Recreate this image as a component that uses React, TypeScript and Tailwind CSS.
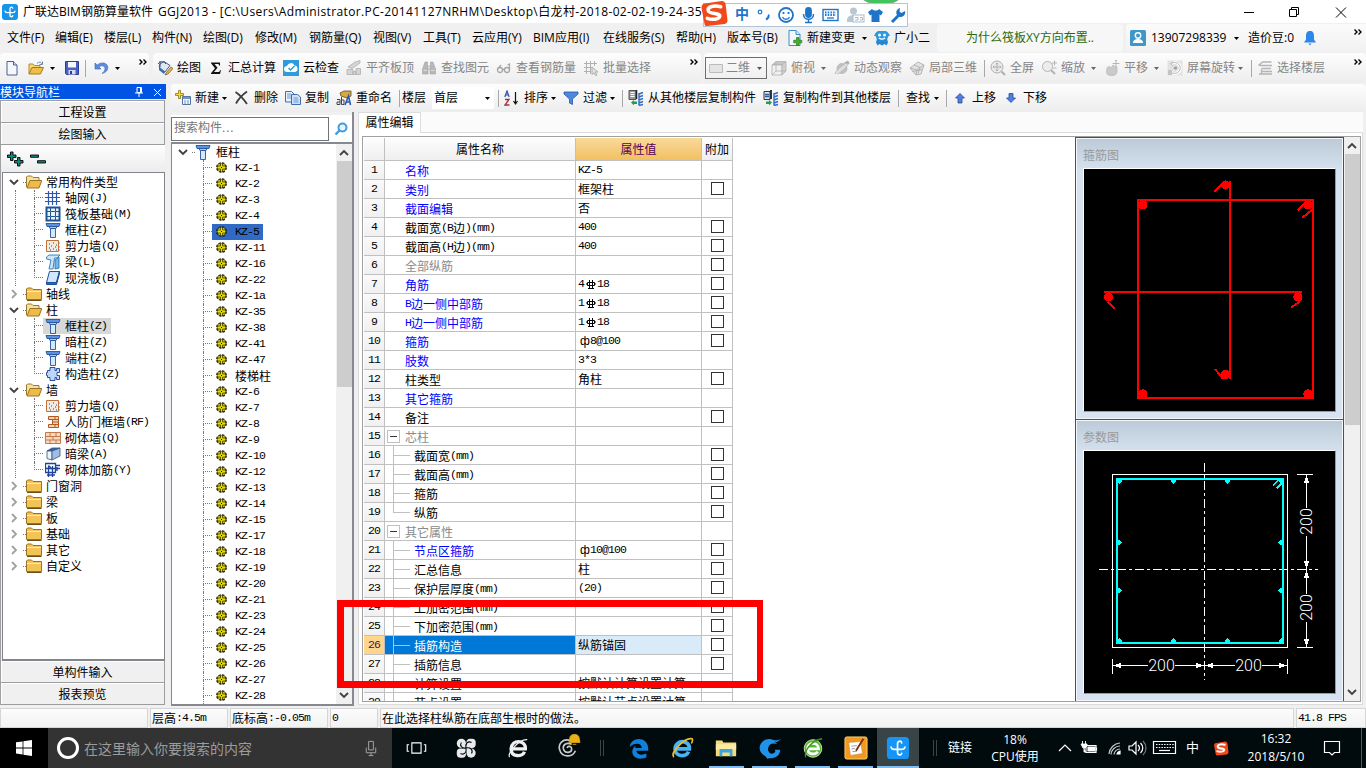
import React from 'react'
import clsx from 'clsx'

const UI = "font-['Open_Sans','Noto_Sans_CJK_SC',sans-serif]"
const SONG = "font-['Noto_Sans_CJK_SC',sans-serif]"

// Chinese runs stay at 12px, latin runs are squeezed to half-width cells
function Song({ children, className }: { children: string; className?: string }) {
  const parts = children.split(/([\x20-\x7e]+)/).filter(Boolean)
  return (
    <span className={clsx(SONG, 'inline-flex items-center whitespace-pre text-[12px] leading-4', className)}>
      {parts.map((part, i) =>
        /^[\x20-\x7e]+$/.test(part) ? (
          <span key={i} className="font-['Liberation_Mono',monospace] text-[11.5px] tracking-[-0.9px]">{part}</span>
        ) : (
          <span key={i}>{part}</span>
        )
      )}
    </span>
  )
}

function Caret({ className }: { className?: string }) {
  return (
    <svg viewBox="0 0 7 4" className={clsx('h-[3px] w-[5px] shrink-0', className)}>
      <path d="M0 0h7L3.5 4z" fill="currentColor" />
    </svg>
  )
}

function Sep({ className }: { className?: string }) {
  return <span className={clsx('h-[17px] w-px shrink-0 bg-[#a8a8a8]', className)} />
}

function More({ className }: { className?: string }) {
  return (
    <svg viewBox="0 0 8 6" className={clsx('h-[6px] w-[8px] shrink-0 self-start', className)} fill="none" stroke="#000" strokeWidth="1.4">
      <path d="M.5.5 3 3 .5 5.5M4.5.5 7 3 4.5 5.5" />
    </svg>
  )
}

const ICONS: Record<string, React.ReactNode> = {
  file: (
    <g>
      <path d="M3 1.5h6.5L13 5v10H3z" fill="#f5f9ff" stroke="#4a6187" />
      <path d="M9.5 1.5V5H13" fill="#cfe0f5" stroke="#4a6187" />
    </g>
  ),
  open: (
    <g>
      <path d="M1 14V4h4l1.500 1.500H12V8" fill="#f5d778" stroke="#b38a2d" />
      <path d="M1 14 4 7.500h11.500L12.500 14z" fill="#f0bd45" stroke="#a77a22" />
      <path d="M9 3.500c2-2 4-1.500 5 .5M14.500 1.500v3h-3" fill="none" stroke="#6c86a5" />
    </g>
  ),
  save: (
    <g>
      <path d="M1.500 1.500h13v13h-12l-1-1z" fill="#4961c5" stroke="#2c3c96" />
      <path d="M4 2h8v5.500H4z" fill="#f5f7ff" />
      <path d="M4.500 10h7v4.500h-7z" fill="#d6daf0" />
      <path d="M6 11h2v3H6z" fill="#2b3a8c" />
    </g>
  ),
  undo: (
    <path d="M2 3v6h6L6 7c2-2 6-1.500 6 1.500 0 2-1 3.500-3 5 4-1 5.800-3.300 5.800-6C14.800 2.500 8 1.500 4.200 5z" fill="#5b8bdc" stroke="#3464b8" strokeWidth=".6" />
  ),
  paint: (
    <g>
      <path d="m3 4 4-2.500 6 4-5 6.500-6-5z" fill="#dfe8f2" stroke="#4b5e7a" />
      <path d="M3 1v6M1 4c2-3 6-3 8 0" fill="none" stroke="#34517e" />
      <path d="M2 7.500 8 12l-1 2-5-4z" fill="#2f6bb3" />
      <path d="m9 13 5-6 2 1.500-5 5.500-3 1z" fill="#e9b64c" stroke="#6b5126" strokeWidth=".7" />
    </g>
  ),
  sigma: <path d="M3 2.500h9v3h-1c0-1.200-.5-1.500-1.500-1.500H6.500l3 3.800L6 12h4c1.200 0 1.700-.5 2-1.800h1L12 14H3v-.8L7 8.300 3 3.300z" fill="#111" />,
  cloud: (
    <g>
      <rect width="16" height="16" fill="#2f9bdf" />
      <path d="M4 12a3 3 0 0 1 0-6 4 4 0 0 1 7.500-.5A3.300 3.300 0 0 1 12 12z" fill="#fff" />
      <path d="m5.500 8 2 2 4-4" fill="none" stroke="#2f9bdf" strokeWidth="1.500" />
    </g>
  ),
  align: (
    <g fill="#d4d4d4" stroke="#b0b0b0" strokeWidth=".8">
      <path d="m2 7 7-5 5-1.500V3L6 8.500z" />
      <path d="M1 9.500h6v5H1zM7 11.500h3v3H7zM10 8.500h4.500v6H10z" />
    </g>
  ),
  binoc: (
    <g fill="#b8b8b8" stroke="#a2a2a2" strokeWidth=".6">
      <path d="M4 2h2.500v3l.5 4v5H1.500V9zM9.500 2H12l2.500 7v5H9V9l.5-4z" />
      <path d="M6.500 6h3v3h-3z" fill="#ddd" />
      <path d="M2.500 10.500h3.500M10 10.500h3.500" stroke="#f4f4f4" />
    </g>
  ),
  glasses: (
    <g fill="none" stroke="#a6a6a6" strokeWidth="1.300">
      <circle cx="4" cy="10" r="2.500" />
      <circle cx="11" cy="10" r="2.500" />
      <path d="M6.500 9.500h2M2 8.500 5 5M13.500 10V4l-2 1" />
    </g>
  ),
  batch: (
    <g fill="none" stroke="#b0b0b0">
      <path d="M1 3.500h13M1 7.500h9M1 11.500h7M3.500 1v13M7.500 1v13M11.500 1v5" />
      <path d="m9 7 6 5h-3l2 3-1.500.5L11 13l-2 1.500z" fill="#e2e2e2" />
    </g>
  ),
  flat: <path d="M1.500 4.500h13v8h-13z" fill="#e4e4e4" stroke="#bcbcbc" />,
  cube: (
    <g stroke="#b0b0b0" strokeWidth=".8">
      <path d="M1 5 5 1.500h10L11 5z" fill="#c6c6c6" />
      <path d="M1 5h10v10H1z" fill="#f0f0f0" />
      <path d="m11 5 4-3.500V11l-4 4z" fill="#d0d0d0" />
      <path d="M5 2v9l-4 4M5 11h10" fill="none" />
    </g>
  ),
  orbit: (
    <g stroke="#b2b2b2" strokeWidth=".8">
      <circle cx="8" cy="8.500" r="5" fill="#c2c2c2" />
      <path d="M1 14c0-3 8-10 13.500-12 2 1-6 10-11 12" fill="#dedede" />
      <path d="m10 3 4-2 1 3" fill="#aaa" />
    </g>
  ),
  local3d: (
    <g fill="#e2e2e2" stroke="#b0b0b0" strokeWidth=".9">
      <path d="m1 8 8-6 6 3-3 9-5 1z" />
      <path d="m1 8 7 2 7-5M8 10l-1 5M5 5l6 2.500-2 6M3.500 11.500l9.500-2" fill="none" />
    </g>
  ),
  full: (
    <g fill="#eaeaea" stroke="#b0b0b0">
      <circle cx="7" cy="7" r="6" />
      <path d="m11.500 11.500 3.500 3.500" strokeWidth="2.200" />
      <path d="M7 3v8M3 7h8M5.800 4.200 7 3l1.200 1.200M5.800 9.800 7 11l1.200-1.200M4.200 5.800 3 7l1.200 1.200M9.800 5.800 11 7 9.800 8.200" fill="none" />
    </g>
  ),
  zoom: (
    <g fill="#ededed" stroke="#b4b4b4">
      <circle cx="6.500" cy="6.500" r="5" />
      <path d="m10 10 4 4" strokeWidth="2.200" />
      <path d="M11 3h5M13.500.5v5M12 8h3.500" fill="none" />
    </g>
  ),
  pan: (
    <g fill="#cacaca" stroke="#b6b6b6" strokeWidth=".7">
      <path d="M3 8c1-2 3-2 4 0l2-3 2 1.500L13 7v5c0 2-2 3.500-5 3.500s-5-.5-5.500-3z" />
      <path d="M12 0v7M8.500 3.500h7M11 1l1-1 1 1" fill="none" strokeWidth="1" />
    </g>
  ),
  rotate: (
    <g>
      <path d="M.5.5h15v15H.5z" fill="#e2e2e2" />
      <path d="M4 4a5.500 5.500 0 1 1 0 8" fill="none" stroke="#fff" strokeWidth="3" />
      <path d="M4.500 3.500A5.500 5.500 0 1 1 4 12M6 1.500l-2.500 2L6 6" fill="none" stroke="#b4b4b4" />
      <path d="M6.500 8.500C7 6 9.500 6 10.500 7.500L9 10z" fill="#a0a0a0" />
      <path d="M1 10h4v5H1z" fill="#c4c4c4" />
    </g>
  ),
  floors: (
    <path d="m1.500 5.500 4-3.500h9M3 5.500h12M5 8.500h9M4.500 8.500v5.500M5 11.500h10M2 14h13" fill="none" stroke="#b4b4b4" strokeWidth="1.300" />
  ),
  add: (
    <g>
      <path d="M7.500 6.500h8v8h-8z" fill="#eef4fc" stroke="#57749f" />
      <path d="M8 7h7v2H8z" fill="#6f95ce" />
      <path d="M9 11h2M12 11h2M9 13h2M12 13h2" stroke="#7895bd" />
      <path d="M3.500.5h2v3h3v2h-3v3h-2v-3h-3v-2h3z" fill="#f5dc45" stroke="#8b7317" strokeWidth=".8" />
    </g>
  ),
  del: <path d="M1.500 2C6 5 9.500 9 13 14M13 1.500C8 5 4.500 9 2 13.500" fill="none" stroke="#3d3d3d" strokeWidth="1.800" />,
  copy: (
    <g fill="#eaf2fc" stroke="#416db0">
      <path d="M.5 1.500h6L9 4v8H.5z" />
      <path d="M6.500 4.500h6L15.500 7v7.500h-9z" fill="#cfe1f8" />
      <path d="M2 4h4M2 6h4M2 8h4M8.500 8h4.500M8.500 10h5M8.500 12h5" fill="none" stroke="#6f97cf" />
    </g>
  ),
  rename: (
    <g>
      <path d="m4 3 4-2h7v5l-4 2-6-2z" fill="#d9a93d" stroke="#5f4a18" strokeWidth=".8" />
      <path d="M1 9.500h3v5H1v-2.500h3M5.500 7v7.500H8V10H6" fill="none" stroke="#444" />
      <path d="m9 15 3.500-9 2 9M10 12h4" fill="none" stroke="#2759b8" strokeWidth="1.600" />
    </g>
  ),
  sort: (
    <g fill="none">
      <path d="m.8 7 2.200-6 2.200 6M1.500 5h3" stroke="#2b4fa8" strokeWidth="1.200" />
      <path d="M1 9.500h4L1 15h4.500" stroke="#a8323a" strokeWidth="1.300" />
      <path d="M11.500 2v12M9.500 11l2 3 2-3" stroke="#111" strokeWidth="1.200" />
    </g>
  ),
  filter: <path d="M1 2h14v2L9.500 9v5.500l-3-1.500V9L1 4z" fill="#4f86e0" stroke="#2657a8" strokeWidth=".8" />,
  copyfrom: (
    <g>
      <path d="M1 .5h7v9H1z" fill="#9a9a9a" stroke="#555" />
      <path d="M2.500 2.500h4M2.500 4.500h4M2.500 6.500h4" stroke="#fff" />
      <path d="M8.500 0v9" stroke="#222" strokeWidth="1.500" />
      <path d="m11 4 4-1.500M11 7l4-1.500M11 10l4-1.500M11 13l4-1.500M11 15.500l4-1M11 3v12.500" stroke="#2f6bc4" strokeWidth="1.400" />
      <path d="m3 12.500 3-2.500v1.500h3V14H6v1.500z" fill="#1ea04c" />
    </g>
  ),
  copyto: (
    <g>
      <path d="M1 1.500h6v8H1z" fill="#dfe6f2" stroke="#333" />
      <path d="M2 4.500h4M2 6.500h4" stroke="#2c5cb0" strokeWidth="1.500" />
      <path d="M8 0v9" stroke="#222" strokeWidth="1.800" />
      <path d="m11 4 4-1.500M11 7l4-1.500M11 10l4-1.500M11 13l4-1.500M11 15.500l4-1M11 3v12.500" stroke="#2f6bc4" strokeWidth="1.400" />
      <path d="m9 12.500-3-2.500v1.500H3V14h3v1.500z" fill="#1ea04c" />
    </g>
  ),
  up: <path d="m8 3.500 4.500 4.500H10v5H6V8H3.500z" fill="#4f7fe0" stroke="#24489e" strokeWidth=".8" />,
  down: <path d="M8 12.500 3.500 8H6V3.500h4V8h2.500z" fill="#4f7fe0" stroke="#24489e" strokeWidth=".8" />,
  change: (
    <g>
      <path d="M2 .5h7l4 4v11H2z" fill="#f2f9ff" stroke="#3a8fc5" />
      <path d="M9 .5v4h4" fill="#cfe6f7" stroke="#3a8fc5" />
      <path d="M9.500 7.500h2.500v2.800h2.800v2.500H12v2.800H9.500v-2.800H6.700v-2.500h2.800z" fill="#45b02d" stroke="#2a7a18" strokeWidth=".7" />
    </g>
  ),
  mascot: (
    <g>
      <path d="M3 8.500h10l1 4-1.500 3-2-1.500L8 15.500 5.500 14l-2 1.500L2 12.500z" fill="#2586d0" />
      <path d="M2 2.500 4 1h8l2 1.500 2 3-2 1c0 3-2.500 4-6 4s-6-1-6-4l-2-1z" fill="#2b98e2" />
      <circle cx="5.500" cy="5" r="1.500" fill="#fff" />
      <circle cx="10.500" cy="5" r="1.500" fill="#fff" />
      <path d="M5 8c2 1.500 4 1.500 6 0" fill="none" stroke="#fff" strokeWidth="1.200" />
    </g>
  ),
  user: (
    <g>
      <rect width="16" height="16" rx="1.500" fill="#3f97c9" />
      <circle cx="8" cy="5.500" r="2.700" fill="none" stroke="#fff" strokeWidth="1.500" />
      <path d="M3 13c0-3 2.500-4 5-4s5 1 5 4z" fill="#fff" />
    </g>
  ),
  bell: (
    <path d="M8 1c3 0 4 2 4 5v3.500l2 3H2l2-3V6c0-3 1-5 4-5zM6.500 13.500h3L8 15.500z" fill="#2f86ea" />
  ),
  appLogo: (
    <g>
      <rect width="16" height="16" rx="3" fill="#1594ea" />
      <path d="M10.800 4.200c-.3-1.700-2.800-1.500-2.800.5V11c0 2.200 2.500 2.200 2.800.7M3 7.200c.3 1.300 1.200 1.500 2.200 1.500h5.600c1.200 0 2-.3 2.200-1.500M8 8.700v3.500" fill="none" stroke="#fff" strokeWidth="1.300" strokeLinecap="round" />
    </g>
  ),
  folder: (
    <g>
      <path d="M.5 13.500V3l1-1h4L7 3.500h8.500v10z" fill="#f2c458" stroke="#9a7426" />
      <path d="M1 5h14v1H1z" fill="#fdebb0" />
      <path d="M1 14.500h14.500" stroke="#6e5017" />
    </g>
  ),
  folderOpen: (
    <g>
      <path d="M.5 13V3l1-1h4L7 3.500h6V7" fill="#f8e09a" stroke="#9a7a30" />
      <path d="m1 14 3-7.500h11.800L13 14z" fill="#efbb48" stroke="#9a7426" />
    </g>
  ),
  axis: <path d="M0 3.500h15M0 7.500h15M0 11.500h15M3.500 1v14M7.500 1v14M11.500 1v14" fill="none" stroke="#2c55b0" strokeWidth="1.200" />,
  raft: (
    <g fill="none" stroke="#1d5496">
      <path d="M1.500 1.500h13v13h-13z" strokeWidth="2" fill="#e6f2fc" />
      <path d="M5.500 5.500h5v5h-5zM5.500 2v3M10.500 2v3M5.500 11v3M10.500 11v3M2 5.500h3M2 10.500h3M11 5.500h3M11 10.500h3" />
    </g>
  ),
  column: (
    <g stroke="#24549e" strokeWidth=".9">
      <path d="M1 1.500h14l-1 3H2z" fill="#5c93e0" />
      <path d="M4 4.500h8l-1 2H5z" fill="#a9cbf5" />
      <path d="M5.500 6.500h5v9h-5z" fill="#d6e8fc" />
    </g>
  ),
  shear: (
    <g>
      <path d="M1.500 2.500h12v11h-12z" fill="#efeae4" stroke="#c0703a" />
      <path d="M4 6h1M8 5h1M6 8h1M10 9h1M4 10h1M8 11h1M11 7h1M11 12h1M5 12h1" stroke="#444" />
      <path d="M13 5h2M13 9h2M13 12h2" stroke="#c0703a" />
    </g>
  ),
  beam: (
    <g stroke="#2c78b8" strokeWidth=".9" fill="#cde6fa">
      <path d="M1.500 3 4 1h11l-3 3H9.500L8 15H4L6 6 1.500 5z" />
      <path d="m10 6 4-3v11l-4 1z" fill="#77b5e8" />
    </g>
  ),
  slab: (
    <g stroke="#1c50a0">
      <path d="M4.500 1.500h10l-3 11h-10z" fill="#d2e6fb" />
      <path d="M1.500 12.500v2h10l3-11v-2l-3 11z" fill="#2c66c0" />
    </g>
  ),
  gouzao: <path d="M5 1.500h5v3h1.500v-2h3v4H12v3h2.500v4h-3v-2H10v3H5v-3H2.500v-2h-1v-3h1v-2H5z" fill="#bcd6f8" stroke="#2a4d9c" />,
  rf: <path d="M3.500 2.500h10v11h-10v-3h4v-5h-4zM7.500 5.500h6M7.500 8h6M7.500 10.500h6M10 2.500v3M10 10.500v3" fill="#f3d3b8" stroke="#b4581e" />,
  brick: (
    <g>
      <path d="M.5 2.500h15v11H.5z" fill="#f6d9c0" stroke="#c27a48" />
      <path d="M1 6.500h14M1 10h14M5 2.500v4M11 2.500v4M8 6.500V10M5 10v3.500M11 10v3.500" stroke="#c27a48" />
    </g>
  ),
  hidden: (
    <g stroke="#33517e" strokeWidth=".8">
      <path d="m2 5 5-3h8L11 5z" fill="#3a66a8" />
      <path d="M2 5h5v9l-5-1.500z" fill="#eef4fb" />
      <path d="m7 5 8-3v8l-8 4z" fill="#9dbde3" />
    </g>
  ),
  jiajin: <path d="M.5 1.500h10v9H.5zM0 6.500h15M3.500 4v11M7.500 4v11M10 3.500h5M3.500 3.500l4 4M2 13h8M12 5v4" fill="none" stroke="#1f44a0" strokeWidth="1.300" />,
  gear: (
    <g>
      <circle cx="5.500" cy="5.500" r="4.500" fill="none" stroke="#1c1c00" strokeWidth="1.800" strokeDasharray="2.400 1.130" />
      <circle cx="5.500" cy="5.500" r="4.200" fill="#f0e000" stroke="#2a2a00" strokeWidth=".5" />
      <path d="M4.500 1v3H1.500M6.500 1v3h3M4.500 10V7h-3M6.500 10V7h3" fill="none" stroke="#3a3a00" strokeWidth=".8" />
      <path d="M5 5h1v1H5z" fill="#111" />
    </g>
  ),
}

function Icon({ name, className = 'h-4 w-4' }: { name: string; className?: string }) {
  return (
    <svg viewBox={name === 'gear' ? '0 0 11 11' : '0 0 16 16'} className={clsx('shrink-0', className)}>
      {ICONS[name]}
    </svg>
  )
}

interface ToolProps {
  icon: string
  label: string
  w: string
  off?: boolean
  caret?: string
}

function Tool({ icon, label, w, off, caret }: ToolProps) {
  return (
    <div className={clsx('flex shrink-0 items-center whitespace-nowrap', w, off && 'text-[#858585]')}>
      <Icon name={icon} className="mr-1 h-4 w-4" />
      <span>{label}</span>
      {caret && <Caret className={clsx(caret, off && 'text-[#666]')} />}
    </div>
  )
}

/* ---------- title + menu ---------- */

function SogouS({ className }: { className?: string }) {
  return (
    <svg viewBox="0 0 28 28" className={className}>
      <path d="M3 4 22 1q3 0 4 3l2 17q0 3-3 4L7 27q-3 0-3-3L1 8q0-3 2-4z" fill="#f04a1a" />
      <path d="M21 7C14 5 7 7 8 11c1 4 13 2 12 6-1 3-8 4-13 2" fill="none" stroke="#fff" strokeWidth="3.600" strokeLinecap="round" />
    </svg>
  )
}

function ImeBar() {
  return (
    <>
      <div className="absolute left-[855px] top-[-36px] h-10 w-[52px] rounded-full border border-[#8f9e92] bg-[#3fc65b]" />
      <div className="absolute left-[703px] top-[3px] flex h-6 w-[205px] items-center border border-[#b3c4d6] bg-white pl-[31px]">
        <span className="-mt-[2px] w-[22px] shrink-0 text-[14px] font-bold leading-5 text-[#1e74c9]">中</span>
        <svg viewBox="-5 0 150 20" className="h-5 w-[150px] shrink-0" fill="none" stroke="#1e74c9" strokeWidth="1.800">
          <circle cx="-2" cy="7" r="1.800" strokeWidth="1.200" />
          <path d="M6 10c1.500 1 0 3.500-2 4.500" strokeWidth="2.200" />
          <circle cx="24" cy="10" r="7" />
          <path d="M20.500 12c1.500 3 5.500 3 7 0" strokeWidth="1.300" />
          <path d="M21.500 7v2M26.500 7v2" />
          <rect x="44" y="3" width="5" height="9" rx="2.500" fill="#1e74c9" />
          <path d="M41.500 9c0 7 10 7 10 0M46.500 14v3.500M43 17.500h7" strokeWidth="1.500" />
          <rect x="61" y="4.500" width="15" height="11" strokeWidth="1.400" />
          <path d="M63 7.500h11M63 10h11" strokeDasharray="1.500 1.200" />
          <path d="M65 13h7" strokeWidth="1.300" />
          <g stroke="none" fill="#b9c6d3">
            <circle cx="91.500" cy="6" r="3.500" />
            <path d="M85 15c0-4 4-5 7-5v7h-7z" />
          </g>
          <rect x="91" y="10" width="11" height="7" stroke="#a9bccd" fill="#fff" strokeWidth="1" />
          <path d="M93 12.500h3v2.500h-3M98 12.500h2.500V15H98" stroke="#a9bccd" strokeWidth="1" />
          <path d="m110 4-4 3 2 3.500 1.500-1V17h8V9.500l1.500 1 2-3.500-4-3c-1.500 2-5 2-7 0z" fill="#1e74c9" stroke="none" />
          <path d="m130 17 7-7" strokeWidth="3" />
          <path d="M143 6a4.500 4.500 0 1 1-5-3l-.5 3.500 2 1.500z" fill="#1e74c9" stroke="none" />
        </svg>
      </div>
      <SogouS className="absolute left-[700px] top-0 h-[27px] w-7" />
    </>
  )
}

function TitleBar() {
  return (
    <div className="flex h-[23px] items-center bg-white pl-[2px] text-[12px]">
      <Icon name="appLogo" />
      <span className="ml-[5px] whitespace-nowrap leading-[23px]">广联达BIM钢筋算量软件</span>
      <span className="ml-[5px] w-[541px] whitespace-nowrap tracking-[0.37px]">GGJ2013 - [C:\Users\Administrator.PC-20141127NRHM\Desktop\白龙村-2018-02-02-19-24-35</span>
      <svg viewBox="0 0 104 12" className="ml-auto mr-[19px] h-3 w-[104px] shrink-0" fill="none" stroke="#000">
        <path d="M1 6.500h10" />
        <path d="M46.500 3.500h7v7h-7zM48.500 3.500v-2h7v7h-2M93 1.500l10 10M103 1.500l-10 10" />
      </svg>
    </div>
  )
}

const MENU = [
  ['文件(F)', 'w-[48px]'],
  ['编辑(E)', 'w-[49px]'],
  ['楼层(L)', 'w-[48px]'],
  ['构件(N)', 'w-[51px]'],
  ['绘图(D)', 'w-[52px]'],
  ['修改(M)', 'w-[54px]'],
  ['钢筋量(Q)', 'w-[64px]'],
  ['视图(V)', 'w-[50px]'],
  ['工具(T)', 'w-[49px]'],
  ['云应用(Y)', 'w-[61px]'],
  ['BIM应用(I)', 'w-[70px]'],
  ['在线服务(S)', 'w-[73px]'],
  ['帮助(H)', 'w-[51px]'],
  ['版本号(B)', 'w-[60px]'],
]

function MenuBar() {
  return (
    <div className="flex h-[30px] items-center pl-[7px] text-[12px]">
      {MENU.map(([label, w]) => (
        <span key={label} className={clsx('shrink-0 whitespace-nowrap', w)}>{label}</span>
      ))}
      <Tool icon="change" label="新建变更" w="w-[87px]" caret="ml-[7px]" />
      <Tool icon="mascot" label="广小二" w="w-[63px]" />
      <div className="flex h-7 w-[186px] shrink-0 items-center justify-center rounded-sm bg-[#f7f7f7] text-[#2a6a0c]">为什么筏板XY方向布置..</div>
      <div className="ml-[3px] flex h-7 flex-1 items-center rounded-l-sm bg-linear-to-b from-[#fbfbfb] to-[#f1f1f1] pl-1">
        <Icon name="user" />
        <span className="ml-[5px] w-[83px] whitespace-nowrap">13907298339</span>
        <Caret />
        <span className="ml-[9px] w-[54px] whitespace-nowrap">造价豆:0</span>
        <Icon name="bell" />
        <More className="ml-auto mr-1 mt-[5px]" />
      </div>
    </div>
  )
}

const bar = 'flex items-center rounded-sm bg-linear-to-b from-[#fdfdfd] to-[#ededed]'

function MainToolbar() {
  return (
    <div className="flex h-[31px] gap-1 pb-px text-[12px]">
      <div className={clsx(bar, 'w-[149px] shrink-0 pl-1')}>
        <Icon name="file" className="mr-2 h-4 w-4" />
        <Icon name="open" className="mr-[6px] h-4 w-4" />
        <Caret className="mr-[9px]" />
        <Icon name="save" className="mr-[5px] h-4 w-4" />
        <Sep className="mr-[7px] h-6" />
        <Icon name="undo" className="mr-[6px] h-4 w-4" />
        <Caret />
        <More className="ml-auto mr-[2px] mt-[6px]" />
      </div>
      <div className={clsx(bar, 'w-[548px] shrink-0 pl-1')}>
        <Tool icon="paint" label="绘图" w="w-[51px]" />
        <Tool icon="sigma" label="汇总计算" w="w-[75px]" />
        <Tool icon="cloud" label="云检查" w="w-[63px]" />
        <Tool off icon="align" label="平齐板顶" w="w-[75px]" />
        <Tool off icon="binoc" label="查找图元" w="w-[75px]" />
        <Tool off icon="glasses" label="查看钢筋量" w="w-[87px]" />
        <Tool off icon="batch" label="批量选择" w="w-[75px]" />
        <More className="ml-auto mr-[3px] mt-[6px]" />
      </div>
      <div className={clsx(bar, '-ml-px flex-1')}>
        <div className="ml-px mr-[4px] flex h-[22px] w-[62px] shrink-0 items-center border border-[#6d6d6d] pl-[2px] text-[#858585]">
          <Icon name="flat" className="mr-[2px] h-4 w-4" />
          <span>二维</span>
          <Caret className="ml-[7px] text-[#555]" />
        </div>
        <Tool off icon="cube" label="俯视" w="w-[63px]" caret="ml-[6px]" />
        <Tool off icon="orbit" label="动态观察" w="w-[75px]" />
        <Tool off icon="local3d" label="局部三维" w="w-[75px]" />
        <Sep className="mr-[5px]" />
        <Tool off icon="full" label="全屏" w="w-[51px]" />
        <Tool off icon="zoom" label="缩放" w="w-[63px]" caret="ml-[6px]" />
        <Tool off icon="pan" label="平移" w="w-[63px]" caret="ml-[6px]" />
        <Tool off icon="rotate" label="屏幕旋转" w="w-[84px]" caret="ml-[3px]" />
        <Sep className="mr-[5px]" />
        <Tool off icon="floors" label="选择楼层" w="w-[75px]" />
        <More className="ml-auto mr-1 mt-[6px]" />
      </div>
    </div>
  )
}

function ComponentToolbar() {
  return (
    <div className={clsx(bar, 'h-7 shrink-0 pl-1 text-[12px]')}>
      <Tool icon="add" label="新建" w="w-[59px]" caret="ml-[3px]" />
      <Tool icon="del" label="删除" w="w-[51px]" />
      <Tool icon="copy" label="复制" w="w-[51px]" />
      <Tool icon="rename" label="重命名" w="w-[63px]" />
      <Sep className="mr-[2px]" />
      <span className="w-[30px] shrink-0">楼层</span>
      <div className="flex h-[22px] w-[62px] shrink-0 items-center bg-white pl-[2px]">
        <span className="w-[51px]">首层</span>
        <Caret />
      </div>
      <Sep className="ml-1 mr-[5px]" />
      <Tool icon="sort" label="排序" w="w-[59px]" caret="ml-[3px]" />
      <Tool icon="filter" label="过滤" w="w-[59px]" caret="ml-[3px]" />
      <Sep className="mr-[5px]" />
      <Tool icon="copyfrom" label="从其他楼层复制构件" w="w-[135px]" />
      <Tool icon="copyto" label="复制构件到其他楼层" w="w-[135px]" />
      <Sep className="mr-[7px]" />
      <span className="w-[28px] shrink-0">查找</span>
      <Caret className="mr-[7px]" />
      <Sep className="mr-[5px]" />
      <Tool icon="up" label="上移" w="w-[51px]" />
      <Tool icon="down" label="下移" w="w-[51px]" />
    </div>
  )
}

/* ---------- module navigation ---------- */

type NavNode = { label: string; icon?: string; open?: boolean; last?: boolean; active?: boolean }

const NAV: NavNode[] = [
  { label: '常用构件类型', open: true },
  { label: '轴网(J)', icon: 'axis' },
  { label: '筏板基础(M)', icon: 'raft' },
  { label: '框柱(Z)', icon: 'column' },
  { label: '剪力墙(Q)', icon: 'shear' },
  { label: '梁(L)', icon: 'beam' },
  { label: '现浇板(B)', icon: 'slab', last: true },
  { label: '轴线' },
  { label: '柱', open: true },
  { label: '框柱(Z)', icon: 'column', active: true },
  { label: '暗柱(Z)', icon: 'column' },
  { label: '端柱(Z)', icon: 'column' },
  { label: '构造柱(Z)', icon: 'gouzao', last: true },
  { label: '墙', open: true },
  { label: '剪力墙(Q)', icon: 'shear' },
  { label: '人防门框墙(RF)', icon: 'rf' },
  { label: '砌体墙(Q)', icon: 'brick' },
  { label: '暗梁(A)', icon: 'hidden' },
  { label: '砌体加筋(Y)', icon: 'jiajin', last: true },
  { label: '门窗洞' },
  { label: '梁' },
  { label: '板' },
  { label: '基础' },
  { label: '其它' },
  { label: '自定义' },
]

function Chevron({ open, className }: { open?: boolean; className?: string }) {
  return (
    <svg viewBox="0 0 10 10" className={clsx('h-[10px] w-[10px] shrink-0', className)} fill="none" strokeWidth="1.800">
      {open ? <path d="m1 3 4 4 4-4" stroke="#404040" /> : <path d="m3 1 4 4-4 4" stroke="#a0a0a0" />}
    </svg>
  )
}

function Branch({ last, className }: { last?: boolean; className?: string }) {
  return (
    <span className={clsx('flex h-4 shrink-0 flex-col', className)}>
      <span className="h-2 border-b border-l border-dotted border-[#777]" />
      <span className={clsx('h-2', !last && 'border-l border-dotted border-[#777]')} />
    </span>
  )
}

function NavRow({ node }: { node: NavNode }) {
  if (!node.icon) {
    return (
      <div className="flex h-4 items-center pl-[6px]">
        <Chevron open={node.open} />
        <span className="ml-1 h-px w-[3px] border-t border-dotted border-[#777]" />
        <Icon name={node.open ? 'folderOpen' : 'folder'} />
        <Song className="ml-[4px]">{node.label}</Song>
      </div>
    )
  }
  return (
    <div className="flex h-4 items-center pl-3">
      <span className="h-4 w-[19px] shrink-0 border-l border-dotted border-[#777]" />
      <Branch last={node.last} className="w-[9px]" />
      <span className={clsx('flex h-4 items-center pl-[2px] pr-1', node.active && 'bg-[#d8d8d8]')}>
        <Icon name={node.icon} />
        <Song className="ml-1">{node.label}</Song>
      </span>
    </div>
  )
}

function NavButton({ children }: { children: string }) {
  return (
    <div className="flex h-[22px] shrink-0 items-center justify-center border-b border-r border-[#9c9c9c] bg-[#f0f0f0] shadow-[inset_1px_1px_0_#fff]">
      <Song>{children}</Song>
    </div>
  )
}

function ModuleNav() {
  return (
    <div className="mb-px flex w-[166px] shrink-0 flex-col">
      <div className="flex h-[15px] shrink-0 items-center bg-[#0054e3] text-white">
        <Song>模块导航栏</Song>
        <svg viewBox="0 0 28 10" className="ml-auto mr-1 h-[10px] w-7" fill="none" stroke="#fff">
          <path d="M3 .5h4.500v5H3zM6.500 0v6M1 6h8M5 6v4M20 2l7 7M27 2l-7 7" />
        </svg>
      </div>
      <div className="mr-px mt-px flex min-h-0 flex-1 flex-col border-l border-t border-[#a0a0a0]">
        <NavButton>工程设置</NavButton>
        <NavButton>绘图输入</NavButton>
        <div className="flex h-[27px] shrink-0 items-center bg-linear-to-b from-[#fefefe] to-[#ececec] pl-[6px]">
          <svg viewBox="0 0 40 16" className="h-4 w-10" fill="#0e8a80" stroke="#000" strokeWidth=".9">
            <path d="M3.500 1h2.500v3h3v2.500h-3v3H3.500v-3h-3V4h3zM10.500 6.500H13v3h3V12h-3v3h-2.500v-3h-3V9.500h3zM23.500 4h8v2.300h-8zM30.500 9.700h8V12h-8z" />
          </svg>
        </div>
        <div className="ml-px min-h-0 flex-1 border border-b-2 border-[#82868c] bg-white pt-px">
          {NAV.map((node, i) => (
            <NavRow key={i} node={node} />
          ))}
        </div>
        <NavButton>单构件输入</NavButton>
        <NavButton>报表预览</NavButton>
      </div>
    </div>
  )
}

/* ---------- component list ---------- */

const COMPONENTS = [
  'KZ-1', 'KZ-2', 'KZ-3', 'KZ-4', 'KZ-5', 'KZ-11', 'KZ-16', 'KZ-22', 'KZ-1a', 'KZ-35', 'KZ-38', 'KZ-41',
  'KZ-47', '楼梯柱', 'KZ-6', 'KZ-7', 'KZ-8', 'KZ-9', 'KZ-10', 'KZ-12', 'KZ-13', 'KZ-14', 'KZ-15', 'KZ-17',
  'KZ-18', 'KZ-19', 'KZ-20', 'KZ-21', 'KZ-23', 'KZ-24', 'KZ-25', 'KZ-26', 'KZ-27', 'KZ-28',
]

function ScrollBar({ thumb }: { thumb: string }) {
  return (
    <div className="flex w-[16px] shrink-0 flex-col items-center bg-[#f0f0f0]">
      <div className="flex h-[17px] items-center">
        <Chevron open className="rotate-180" />
      </div>
      <div className={clsx('w-[15px] bg-[#cdcdcd]', thumb)} />
      <div className="mt-auto flex h-[18px] items-center">
        <Chevron open />
      </div>
    </div>
  )
}

function ComponentList() {
  return (
    <div className="flex w-[183px] shrink-0 flex-col border-r-2 border-[#868990]">
      <div className="mt-[3px] flex h-[27px] shrink-0 items-center bg-white">
        <div className="flex h-6 w-[158px] items-center border border-[#6f7378] pb-[2px] pl-[2px] text-[12px] text-[#777]">
          搜索构件<span className="tracking-[1px]">...</span>
        </div>
        <svg viewBox="0 0 14 14" className="ml-[5px] h-[14px] w-[14px]" fill="none" stroke="#3f9be0">
          <circle cx="8.500" cy="5.500" r="4" strokeWidth="2" fill="#e6f4ff" />
          <path d="m1.500 12.500 4-4" strokeWidth="2.400" />
        </svg>
      </div>
      <div className="flex min-h-0 flex-1 border-2 border-l border-r-0 border-[#868990] bg-white">
        <div className="min-w-0 flex-1 overflow-hidden">
          <div className="flex h-4 items-center pl-[6px]">
            <Chevron open />
            <span className="ml-1 h-px w-[3px] border-t border-dotted border-[#777]" />
            <Icon name="column" />
            <Song className="ml-[5px]">框柱</Song>
          </div>
          {COMPONENTS.map(name => (
            <div key={name} className="flex h-4 items-center pl-[31px]">
              <Branch className="w-[9px]" />
              <span className={clsx('flex h-4 items-center pl-1 pr-1', name === 'KZ-5' && 'bg-[#316ac5]')}>
                <Icon name="gear" className="-mt-px h-[11px] w-[11px]" />
                <Song className="ml-2">{name}</Song>
              </span>
            </div>
          ))}
        </div>
        <ScrollBar thumb="h-[226px]" />
      </div>
    </div>
  )
}

/* ---------- property editor ---------- */

type Prop = {
  name: string
  value?: string
  color?: string
  check?: boolean
  group?: boolean
  child?: boolean
  last?: boolean
  selected?: boolean
}

const blue = 'text-[#0000ff]'
const grey = 'text-[#8a8a8a]'

const PROPS: Prop[] = [
  { name: '名称', value: 'KZ-5', color: blue },
  { name: '类别', value: '框架柱', color: blue, check: true },
  { name: '截面编辑', value: '否', color: blue },
  { name: '截面宽(B边)(mm)', value: '400', check: true },
  { name: '截面高(H边)(mm)', value: '400', check: true },
  { name: '全部纵筋', color: grey, check: true },
  { name: '角筋', value: '4#18', color: blue, check: true },
  { name: 'B边一侧中部筋', value: '1#18', color: blue, check: true },
  { name: 'H边一侧中部筋', value: '1#18', color: blue, check: true },
  { name: '箍筋', value: 'ф8@100', color: blue, check: true },
  { name: '肢数', value: '3*3', color: blue },
  { name: '柱类型', value: '角柱', check: true },
  { name: '其它箍筋', color: blue },
  { name: '备注', check: true },
  { name: '芯柱', color: grey, group: true },
  { name: '截面宽(mm)', child: true, check: true },
  { name: '截面高(mm)', child: true, check: true },
  { name: '箍筋', child: true, check: true },
  { name: '纵筋', child: true, check: true, last: true },
  { name: '其它属性', color: grey, group: true },
  { name: '节点区箍筋', value: 'ф10@100', color: blue, child: true, check: true },
  { name: '汇总信息', value: '柱', child: true, check: true },
  { name: '保护层厚度(mm)', value: '(20)', child: true, check: true },
  { name: '上加密范围(mm)', child: true, check: true },
  { name: '下加密范围(mm)', child: true, check: true },
  { name: '插筋构造', value: '纵筋锚固', child: true, check: true, selected: true },
  { name: '插筋信息', child: true, check: true },
  { name: '计算设置', value: '按默认计算设置计算', child: true },
  { name: '节点设置', value: '按默认节点设置计算', child: true },
]

// grade III rebar mark: circle crossed by two bars on a base line
function RebarMark() {
  return (
    <svg viewBox="0 0 10 11" className="ml-[2px] mr-px mt-px h-[11px] w-[10px]" fill="none" stroke="#000">
      <path d="M1.500 3.500h7v3h-7zM0 5h2M8 5h2M3.500 1v8M6.500 1v8M2 9.500h6" />
    </svg>
  )
}

function Value({ text }: { text: string }) {
  if (text.includes('#')) {
    const [count, size] = text.split('#')
    return (
      <span className="flex items-center">
        <Song>{count}</Song>
        <RebarMark />
        <Song>{size}</Song>
      </span>
    )
  }
  if (text.startsWith('ф')) {
    return (
      <span className="flex items-center pl-[2px]">
        <span className="w-[10px] font-['Liberation_Sans',sans-serif] text-[12px] leading-4">ф</span>
        <Song>{text.slice(1)}</Song>
      </span>
    )
  }
  return <Song>{text}</Song>
}

const grid = 'grid grid-cols-[21px_191px_126px_31px]'
const cell = 'border-b border-r border-[#c0c0c0]'

function PropRow({ prop, no }: { prop: Prop; no: number }) {
  return (
    <div className={clsx(grid, 'h-[19px]')}>
      <div className={clsx(cell, 'flex items-center justify-center', prop.selected ? 'bg-[#ffd58c] text-[#4a1050]' : 'bg-linear-to-b from-[#fafafa] to-[#f0f0f0]')}>
        <Song>{String(no)}</Song>
      </div>
      <div className={clsx(cell, 'flex items-stretch', prop.selected ? 'bg-[#0078d7] text-white' : prop.color)}>
        {prop.child ? (
          <span className="ml-2 mr-1 flex w-[17px] shrink-0 flex-col">
            <span className="h-[10px] border-b border-l border-[#c0c0c0]" />
            <span className={clsx('-mb-px flex-1', !prop.last && 'border-l border-[#c0c0c0]')} />
          </span>
        ) : (
          <span className="flex w-5 shrink-0 items-center pl-[2px]">
            {prop.group && (
              <span className="flex h-[13px] w-[13px] items-center justify-center border border-[#c0c0c0]">
                <span className="h-px w-[7px] bg-[#333]" />
              </span>
            )}
          </span>
        )}
        <Song className="pt-px">{prop.name}</Song>
      </div>
      <div className={clsx(cell, 'flex items-center pb-px pl-[2px]', prop.selected && 'bg-[#d9eaf9]')}>
        {prop.value && <Value text={prop.value} />}
      </div>
      <div className={clsx(cell, 'flex items-start justify-center pt-[2px]')}>
        {prop.check && <span className="h-[13px] w-[13px] border border-[#333] bg-white" />}
      </div>
    </div>
  )
}

function PropTable() {
  return (
    <div className="w-[369px] shrink-0 overflow-hidden">
      <div className={clsx(grid, 'h-[23px]')}>
        <div className={clsx(cell, 'bg-linear-to-b from-[#fdfdfd] to-[#efefef]')} />
        <div className={clsx(cell, 'flex items-center justify-center bg-linear-to-b from-[#fdfdfd] to-[#efefef]')}><Song>属性名称</Song></div>
        <div className={clsx(cell, 'flex items-center justify-center bg-linear-to-b from-[#f9d99b] to-[#f2c05f] text-[#560056]')}><Song>属性值</Song></div>
        <div className={clsx(cell, 'flex items-center justify-center bg-linear-to-b from-[#fdfdfd] to-[#efefef]')}><Song>附加</Song></div>
      </div>
      {PROPS.map((prop, i) => (
        <PropRow key={i} prop={prop} no={i + 1} />
      ))}
    </div>
  )
}

/* ---------- previews ---------- */

function StirrupDrawing() {
  const bars = [[59, 36], [224, 36], [59, 225], [224, 225], [141.500, 16], [141.500, 205.500], [24.500, 128], [214, 128]]
  return (
    <svg viewBox="0 0 251 242" className="h-[242px] w-[251px]" fill="none" stroke="#f00" strokeWidth="2" shapeRendering="crispEdges">
      <path d="M54 31h175v198H54zM146 12v198M20 123h198" />
      <path d="m130 23 8-8M213.500 41.500l8-8M218.500 48.500l10-8M24 133l7 7M207 138.500l9-6M131 200l8 10" />
      {bars.map(([x, y], i) => (
        <circle key={i} cx={x} cy={y} r="4.600" fill="#f00" stroke="none" />
      ))}
    </svg>
  )
}

function SectionDrawing() {
  const dots = [[35, 30], [89.500, 30], [143.500, 30], [197, 30], [35, 91.500], [35, 139.500], [197, 91.500], [197, 139.500], [35, 190], [89.500, 190], [143.500, 190], [197, 190]]
  return (
    <svg viewBox="0 0 251 242" className="h-[242px] w-[251px]" fill="none" stroke="#fff" shapeRendering="crispEdges">
      <path d="M28.500 23.500h175v173h-175z" />
      <path d="M120.500 12v217M15 118.500h219" strokeDasharray="9 3 3 3" />
      <path d="M33 28h166v164H33z" stroke="#0ff" strokeWidth="2" />
      <path d="m189 34.500 6-6M192.500 37.500l6-6" stroke="#0ff" strokeWidth="2" />
      {dots.map(([x, y], i) => (
        <path key={i} d={`M${x - 3} ${y}l3-3 3 3-3 3z`} fill="#0ff" stroke="none" />
      ))}
      <path d="M213 23.500h16M213 196.500h16M222.500 23.500V57M222.500 85v58M222.500 171v25" />
      <path d="M28.500 208v15M203.500 208v15M28.500 214.500H64M91 214.500h60M178 214.500h25" />
      <g fill="#fff" stroke="none">
        <path d="m222.500 24 2.500 8h-5zM222.500 118l2.500-8h-5zM222.500 119l2.500 8h-5zM222.500 196l2.500-8h-5z" />
        <path d="m29 214.500 8-2.500v5zM120 214.500l-8-2.500v5zM121 214.500l8-2.500v5zM203 214.500l-8-2.500v5z" />
        <g className="font-['Roboto',sans-serif] text-[16px] font-light" textAnchor="middle">
          <text x="77.500" y="220">200</text>
          <text x="164.500" y="220">200</text>
          <text transform="translate(228 70.500) rotate(-90)">200</text>
          <text transform="translate(228 156.500) rotate(-90)">200</text>
        </g>
      </g>
    </svg>
  )
}

function Preview({ title, children }: { title: string; children: React.ReactNode }) {
  return (
    <div className="flex h-[282px] shrink-0 flex-col border border-b-0 border-[#4c5055] bg-linear-to-b from-[#bccad8] via-[#d6e2ef] via-12% to-[#d8e3f1] px-[7px] shadow-[inset_0_0_0_1px_#f4f8fc]">
      <div className="h-[30px] shrink-0 pt-[9px] text-[12px] leading-[18px] text-[#9a9a9a]">{title}</div>
      <div className="w-[253px] border border-[#9a9a9a] border-l-white border-t-white bg-black">{children}</div>
    </div>
  )
}

function PropertyPanel() {
  return (
    <div className="ml-1 mr-[3px] flex min-w-0 flex-1 flex-col">
      <div className="flex h-[21px] shrink-0 border-b border-[#dcdcdc] bg-[#fbfbfb]">
        <div className="mb-[-1px] flex w-[63px] items-center justify-center border border-b-0 border-[#dcdcdc] bg-white pb-[2px]"><Song>属性编辑</Song></div>
      </div>
      <div className="mb-px flex min-h-0 flex-1 flex-col border border-t-0 border-[#dcdcdc] bg-white pb-[2px] pl-[3px] pr-px pt-[3px]">
        <div className="flex min-h-0 flex-1 overflow-hidden border border-[#a0a0a0] pl-px pt-px">
          <PropTable />
          <div className="-mt-px ml-auto flex shrink-0">
            <div className="flex w-[269px] flex-col">
              <Preview title="箍筋图">
                <StirrupDrawing />
              </Preview>
              <Preview title="参数图">
                <SectionDrawing />
              </Preview>
            </div>
            <ScrollBar thumb="h-[271px]" />
          </div>
        </div>
      </div>
    </div>
  )
}

/* ---------- bottom bars ---------- */

const statusCell = 'flex h-5 shrink-0 items-center border border-[#d5d5d5] bg-linear-to-b from-[#fcfcfc] to-[#f2f2f2] pl-px'

function StatusBar() {
  return (
    <div className="flex h-[22px] shrink-0 gap-[2px] pt-[2px]">
      <div className={clsx(statusCell, 'w-[148px]')} />
      <div className={clsx(statusCell, 'w-[78px]')}><Song>层高:4.5m</Song></div>
      <div className={clsx(statusCell, 'w-[98px]')}><Song>底标高:-0.05m</Song></div>
      <div className={clsx(statusCell, 'w-[48px]')}><Song>0</Song></div>
      <div className={clsx(statusCell, 'w-[914px]')}><Song>在此选择柱纵筋在底部生根时的做法。</Song></div>
      <div className={clsx(statusCell, 'w-[70px]')}><Song>41.8 FPS</Song></div>
    </div>
  )
}

const TASKS: { w: string; running?: boolean; active?: boolean; art: React.ReactNode }[] = [
  {
    w: 'w-[48px]',
    art: <path d="M7.500 6.500h10v11h-10zM4.500 8.500h-2v7h2M20.500 8.500h2v7h-2" fill="none" stroke="#fff" strokeWidth="1.200" />,
  },
  {
    w: 'w-[52px]',
    art: (
      <g>
        <g fill="#e8eaeb">
          <rect x="2" y="2" width="10" height="10" rx="5" />
          <rect x="12.500" y="2" width="10" height="10" rx="4" />
          <rect x="2" y="12.500" width="10" height="10" rx="4" />
          <rect x="12.500" y="12.500" width="10" height="10" rx="5" />
          <path d="M9 9h7v7H9z" />
        </g>
        <path d="M12 12C7 13 5 9 7 6M12 12c-1-5 2-8 6-6M12 12c5-1 8 2 6 6M12 12c1 5-2 8-6 6" stroke="#010a0c" strokeWidth="1.200" fill="none" />
      </g>
    ),
  },
  {
    w: 'w-[52px]',
    art: (
      <g fill="none" stroke="#f0f0f0">
        <path d="M4 13h16c1-10-15-11-15.500 0C4.500 22 17 22 19 16" strokeWidth="3.600" />
        <path d="M3 22c-3-4 10-20 19-19" strokeWidth="1.300" />
      </g>
    ),
  },
  {
    w: 'w-[64px]',
    art: (
      <g fill="none" stroke="#c9cbcc" strokeWidth="1.800">
        <path d="M15 4C6 1 1 8 3 14c2 8 14 9 17 1M16 8c-6-3-10 1-9 5 2 6 9 4 9 0 0-3-4-4-5-1" />
        <path d="M15 5c0-5 10-5 10 0l1 5H14zM18 12h4" fill="#e8b11b" stroke="#e0a410" strokeWidth="1" transform="translate(-1 -4)" />
      </g>
    ),
  },
  {
    w: 'w-[42px]',
    art: <path d="M2 11C3-1 22-1 22 13v2H9c1 5 7 5 11 3v4C12 26 3 22 5 14c1-3 3-4 4-5-1 1-1 2-1 3h7c0-6-9-6-13-1z" fill="#1180dc" />,
  },
  {
    w: 'w-[44px]',
    art: (
      <g fill="none">
        <path d="M4 13h16c1-10-15-11-15.500 0C4.500 22 17 22 19 16" stroke="#49b4ef" strokeWidth="4" />
        <path d="M3 22c-4-5 12-22 20-20 1 1 0 4-1 5" stroke="#f0bd2f" strokeWidth="1.800" />
      </g>
    ),
  },
  {
    w: 'w-[44px]',
    running: true,
    art: (
      <g>
        <path d="M1 4h7l1 2h14v15H1z" fill="#f6d978" />
        <path d="M1 8h22v6H1z" fill="#fbe9a6" />
        <path d="M5 21v-8h14v8h-3v-4H8v4z" fill="#3aa6e0" />
      </g>
    ),
  },
  {
    w: 'w-[43px]',
    running: true,
    art: (
      <path d="M24 2c-2 3-5 4-7 3 1 1 2 2 3 3-4-2-9-1-10 4s4 8 7 5c1-1 1-2 0-3h6c0 5-4 9-10 9-2 0-3 0-4 1 0-1-1-2-2-3C2 18 0 14 1 10 3 3 10 1 15 3c3 1 6 1 9-1z" fill="#1f93ea" />
    ),
  },
  {
    w: 'w-[43px]',
    running: true,
    art: (
      <g>
        <circle cx="12" cy="12.500" r="9.500" fill="#58b92e" stroke="#cdeebc" />
        <path d="M6 13h12c0-8-12-8-12 0 0 6 9 7 11 3" fill="none" stroke="#fff" strokeWidth="3" />
        <path d="M4 22C2 14 12 3 22 2" fill="none" stroke="#3c941c" strokeWidth="1.500" />
      </g>
    ),
  },
  {
    w: 'w-[43px]',
    running: true,
    art: (
      <g>
        <rect x="0" y="0" width="24" height="24" rx="2" fill="#f39a1c" stroke="#ffd27a" />
        <path d="m4 6 13-1 2 13-13 2z" fill="#fff" stroke="#b38a52" strokeWidth=".6" />
        <path d="m7 10 6-.5M7 13l4-.5M8 16l5-.5" stroke="#999" />
        <path d="m12 15 8-13" stroke="#7a2f12" strokeWidth="2" />
      </g>
    ),
  },
  {
    w: 'w-[42px]',
    active: true,
    art: (
      <g>
        <rect x="0" y="0" width="24" height="24" rx="4" fill="#1595f5" />
        <path d="M16 6.500c-.5-2.700-4.500-2.500-4.500 .8V17c0 3.200 4 3.200 4.500.8M4.500 11c.4 2 1.800 2.500 3.500 2.500h8c1.800 0 3-.5 3.500-2.500" fill="none" stroke="#fff" strokeWidth="1.800" strokeLinecap="round" />
      </g>
    ),
  },
]

function TaskBar() {
  return (
    <div className="flex h-10 shrink-0 bg-[#010a0c] text-white">
      <div className="flex w-12 shrink-0 items-center justify-center bg-black">
        <svg viewBox="0 0 16 16" className="h-4 w-4" fill="#fff">
          <path d="m0 2.300 6.600-.9v6.100H0zM7.400 1.300 16 0v7.500H7.400zM0 8.400h6.600v6.100L0 13.600zM7.400 8.400H16V16l-8.600-1.300z" />
        </svg>
      </div>
      <div className="flex w-[344px] shrink-0 items-center bg-[#333] pl-[9px]">
        <span className="h-[22px] w-[22px] rounded-full border-[3px] border-white" />
        <span className="ml-[5px] text-[14px] text-[#9b9b9b]">在这里输入你要搜索的内容</span>
        <svg viewBox="0 0 12 18" className="ml-auto mr-[15px] h-[17px] w-3" fill="none" stroke="#a8a8a8">
          <path d="M3.500 1.500h5v9h-5zM1 8v5.500h10V8M6 13.500v3M3.500 16.500h5" />
        </svg>
      </div>
      {TASKS.map((task, i) => (
        <React.Fragment key={i}>
          <div className={clsx('flex shrink-0 flex-col items-center pt-2', task.w, task.active && 'bg-[#394447]', i === 3 && 'pr-4')}>
            <svg viewBox="-1 -1 26 26" className="h-6 w-6 shrink-0 overflow-visible">{task.art}</svg>
            {(task.running || task.active) && <span className={clsx('mt-auto h-[2px] bg-[#7fbdf2]', task.active ? 'w-full' : 'w-[35px]')} />}
          </div>
          {i === 3 && <span className="-ml-[8px] mr-[14px] mt-3 h-4 w-[4px] border-x border-[#3d4445]" />}
        </React.Fragment>
      ))}
      <span className="ml-[14px] mt-3 h-4 w-[4px] shrink-0 border-x border-[#3d4445]" />
      <span className="ml-[11px] w-[43px] shrink-0 self-center text-[12px]">链接</span>
      <div className="flex w-12 shrink-0 flex-col items-center whitespace-nowrap pt-[3px] text-[12px] leading-[17px]">
        <span>18%</span>
        <span>CPU使用</span>
      </div>
      <svg viewBox="0 0 184 24" className="ml-[16px] mt-2 h-6 w-[184px] shrink-0" fill="none" stroke="#fff" strokeWidth="1.200">
        <path d="m4 15 6-6 6 6" />
        <path d="M31 9.500h10v7H31zM41.500 11.500v3" />
        <path d="M33 11h7v4h-7z" fill="#fff" />
        <path d="M27.500 5v3M30.500 5v3M26 8h6v2l-2 2h-2zM29 12v4h2" fill="#fff" strokeWidth=".9" />
        <path d="M54 18a12 12 0 0 1 11-11M56 18.500a9 9 0 0 1 9-8.500M59 18.500a6 6 0 0 1 6-5.500" stroke="#c4c8c9" />
        <path d="M62 18a4 4 0 0 1 3-3v3z" fill="#fff" />
        <path d="M74 10h3l4-4v12l-4-4h-3zM83 9c2 2 2 4 0 6M85.500 7c3 3 3 7 0 10" />
        <path d="M88 5c4 4 4 10 0 14" stroke="#777" />
        <path d="M98.500 5.500h22v12h-22z" />
        <path d="M101 8.500h18M101 11.500h18" strokeDasharray="1.500 1.200" />
        <path d="M104 14.500h11" />
      </svg>
      <span className="-ml-[53px] mr-[14px] self-center text-[13px]">中</span>
      <SogouS className="h-[15px] w-4 shrink-0 self-center" />
      <div className="ml-[10px] flex w-[74px] shrink-0 flex-col items-center pt-[2px] text-[12px] leading-[18px]">
        <span>16:32</span>
        <span>2018/5/10</span>
      </div>
      <svg viewBox="0 0 18 18" className="ml-[10px] mt-[11px] h-[18px] w-[18px] shrink-0" fill="none" stroke="#fff" strokeWidth="1.200">
        <path d="M1.500 2.500h15v11h-5L9 16l-2.500-2.500h-5z" />
      </svg>
      <span className="ml-auto mr-1 w-px bg-[#555]" />
    </div>
  )
}

export default function App() {
  return (
    <div className={clsx(UI, 'relative flex h-[768px] w-[1366px] flex-col overflow-hidden bg-[#f0f0f0] text-black')}>
      <TitleBar />
      <MenuBar />
      <MainToolbar />
      <div className="flex min-h-0 flex-1">
        <ModuleNav />
        <div className="ml-[5px] flex min-w-0 flex-1 flex-col">
          <ComponentToolbar />
          <div className="flex min-h-0 flex-1">
            <ComponentList />
            <PropertyPanel />
          </div>
        </div>
      </div>
      <StatusBar />
      <TaskBar />
      <ImeBar />
      {/* highlight around the dowel bar rows */}
      <div className="pointer-events-none absolute left-[337px] top-[600px] h-[88px] w-[426px] border-[7px] border-r-[6px] border-[#ff0000]" />
    </div>
  )
}
